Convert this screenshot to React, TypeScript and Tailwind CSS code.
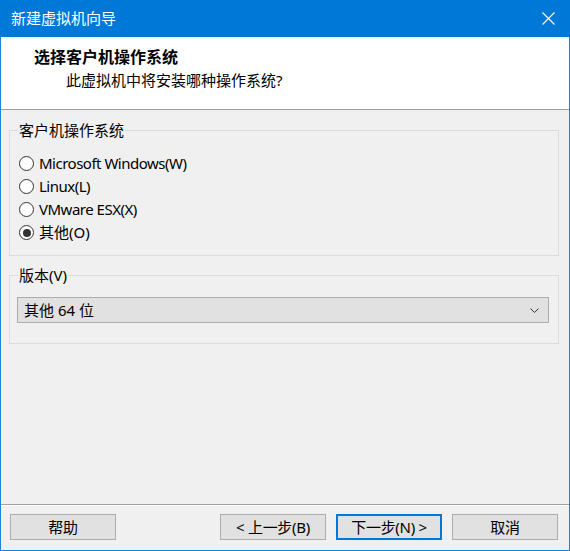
import React, { useState } from "react";

const font = { fontFamily: '"Noto Sans", "Noto Sans CJK SC", sans-serif' };

const osOptions = [
  { id: "win", label: "Microsoft Windows(W)", latin: true },
  { id: "linux", label: "Linux(L)", latin: true },
  { id: "esx", label: "VMware ESX(X)", latin: true },
  { id: "other", label: "其他(O)", latin: false },
];

function Radio({ checked }: { checked: boolean }) {
  return (
    <span className="flex h-[15px] w-[15px] items-center justify-center rounded-full border border-[#333] bg-white">
      {checked && <span className="h-[8px] w-[8px] rounded-full bg-[#333]" />}
    </span>
  );
}

function WinButton({ label, primary }: { label: string; primary?: boolean }) {
  return (
    <button
      type="button"
      className={
        "flex h-[26px] w-[106px] items-center justify-center bg-[#e1e1e1] text-[15px] leading-none tracking-[-0.3px] text-black " +
        (primary ? "border-2 border-[#0078d7]" : "border border-[#adadad]")
      }
    >
      {label}
    </button>
  );
}

export default function App() {
  const [os, setOs] = useState("other");

  return (
    <div
      className="flex h-[551px] w-[570px] flex-col border-x border-b border-[#1a83d8] bg-[#f0f0f0] text-black"
      style={font}
    >
      {/* title bar */}
      <div className="-mx-px flex h-[37px] shrink-0 items-center justify-between bg-[#0078d7] pl-[11px] pr-[15px]">
        <span className="text-[15px] leading-none text-white">新建虚拟机向导</span>
        <svg width="13" height="13" viewBox="0 0 13 13">
          <path d="M0.5 0.5 L12.5 12.5 M12.5 0.5 L0.5 12.5" stroke="white" strokeWidth="1.1" />
        </svg>
      </div>

      {/* header */}
      <div className="flex h-[73px] shrink-0 flex-col border-b border-[#a0a0a0] bg-white pl-[33px] pt-[10px]">
        <div className="text-[16px] font-bold leading-[20px]">选择客户机操作系统</div>
        <div className="mt-[3px] pl-[32px] text-[15px] leading-[20px]">此虚拟机中将安装哪种操作系统?</div>
      </div>

      {/* body */}
      <div className="flex flex-1 flex-col pl-[8px] pr-[10px] pt-[10px]">
        <fieldset className="border border-[#dcdcdc] px-[8px] pb-[11px]">
          <legend className="px-[1px] text-[15px] leading-[20px]">客户机操作系统</legend>
          <div className="mt-[12px] flex flex-col">
            {osOptions.map((o) => (
              <label
                key={o.id}
                className="flex h-[23px] cursor-default items-center gap-[5px] pl-[1px] text-[15px] leading-none"
                onClick={() => setOs(o.id)}
              >
                <Radio checked={os === o.id} />
                <span className={o.latin ? "tracking-[-0.5px]" : ""}>{o.label}</span>
              </label>
            ))}
          </div>
        </fieldset>

        <fieldset className="mt-[9px] border border-[#dcdcdc] pb-[20px] pl-[7px] pr-[9px]">
          <legend className="ml-[1px] px-[1px] text-[15px] leading-[20px]">版本(V)</legend>
          <div className="mt-[12px] flex h-[26px] items-center justify-between border border-[#adadad] bg-[#e1e1e1] pl-[6px] pr-[9px]">
            <span className="text-[15px] leading-none">其他 64 位</span>
            <svg width="9" height="5" viewBox="0 0 9 5">
              <path d="M0.5 0.5 L4.5 4.5 L8.5 0.5" fill="none" stroke="#333" strokeWidth="1" />
            </svg>
          </div>
        </fieldset>
      </div>

      {/* footer */}
      <div className="shrink-0">
        <div className="h-px bg-[#a0a0a0]" />
        <div className="h-px bg-white" />
        <div className="flex items-center pb-[10px] pl-[9px] pr-[11px] pt-[8px]">
          <WinButton label="帮助" />
          <div className="ml-auto flex gap-[10px]">
            <WinButton label="< 上一步(B)" />
            <WinButton label="下一步(N) >" primary />
          </div>
          <div className="ml-[10px]">
            <WinButton label="取消" />
          </div>
        </div>
      </div>
    </div>
  );
}
